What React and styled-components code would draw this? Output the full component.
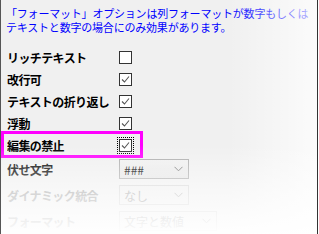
import React from "react";
import styled, { createGlobalStyle } from "styled-components";

const GlobalStyle = createGlobalStyle`
  html, body {
    margin: 0;
    padding: 0;
    background: #fff;
  }
  body {
    font-family: "Noto Sans CJK JP", "Noto Sans", sans-serif;
  }
`;

const Panel = styled.div`
  position: relative;
  width: 316px;
  height: 234px;
  background: #f0f0f0;
  border-left: 1px solid #555;
  border-right: 1px solid #333;
  overflow: hidden;

  &::after {
    content: "";
    position: absolute;
    inset: 0;
    pointer-events: none;
    background:
      linear-gradient(to bottom, rgba(255,255,255,0) 62%, rgba(255,255,255,0.55) 82%, rgba(255,255,255,0.97) 100%),
      linear-gradient(to right, rgba(255,255,255,0) 72%, rgba(255,255,255,0.75) 100%);
  }
`;

const Note = styled.p`
  margin: 0;
  padding: 6px 0 0 5px;
  font-size: 11px;
  line-height: 14px;
  color: #0000ff;
  white-space: nowrap;
  letter-spacing: -0.2px;
`;

const Rows = styled.div`
  margin-top: 12px;
  display: flex;
  flex-direction: column;
`;

const Row = styled.div`
  position: relative;
  display: flex;
  align-items: center;
  height: ${(p) => (p.$tall ? 26 : 22)}px;
  padding-left: 6px;

  ${(p) =>
    p.$highlight &&
    `
    &::before {
      content: "";
      position: absolute;
      left: 0;
      top: -3px;
      width: 136px;
      height: 21px;
      border: 3px solid #ff00ff;
    }
  `}
`;

const Label = styled.span`
  width: 112px;
  flex: none;
  font-size: 12px;
  font-weight: 700;
  letter-spacing: -0.6px;
  color: ${(p) => (p.$disabled ? "#a0a0a0" : "#000")};
  white-space: nowrap;
  overflow: hidden;
`;

const Box = styled.span`
  position: relative;
  width: 11px;
  height: 11px;
  border: 1px solid #333;
  background: #fff;
  display: flex;
  align-items: center;
  justify-content: center;

  ${(p) =>
    p.$focus &&
    `
    outline: 1px dotted #000;
    outline-offset: 1px;
  `}
`;

const Select = styled.div`
  width: ${(p) => p.$width}px;
  height: 18px;
  box-sizing: content-box;
  border: 1px solid ${(p) => (p.$disabled ? "#d4d4d4" : "#acacac")};
  background: ${(p) =>
    p.$disabled ? "#efefef" : "linear-gradient(#f0f0f0, #e5e5e5)"};
  display: flex;
  align-items: center;
  justify-content: space-between;
  padding: 0 5px 0 4px;
  font-size: 12px;
  color: ${(p) => (p.$disabled ? "#a0a0a0" : "#000")};
`;

const Check = () => (
  <svg width="9" height="9" viewBox="0 0 9 9">
    <path d="M1 4.5 L3.5 7 L8 1.5" fill="none" stroke="#555" strokeWidth="1.1" />
  </svg>
);

const Chevron = ({ color }) => (
  <svg width="9" height="6" viewBox="0 0 9 6">
    <path d="M0.5 0.8 L4.5 4.8 L8.5 0.8" fill="none" stroke={color} strokeWidth="1" />
  </svg>
);

export default function App() {
  return (
    <>
      <GlobalStyle />
      <Panel>
        <Note>
          「フォーマット」オプションは列フォーマットが数字もしくは
          <br />
          テキストと数字の場合にのみ効果があります。
        </Note>
        <Rows>
          <Row>
            <Label>リッチテキスト</Label>
            <Box />
          </Row>
          <Row>
            <Label>改行可</Label>
            <Box>
              <Check />
            </Box>
          </Row>
          <Row>
            <Label>テキストの折り返し</Label>
            <Box>
              <Check />
            </Box>
          </Row>
          <Row>
            <Label>浮動</Label>
            <Box>
              <Check />
            </Box>
          </Row>
          <Row $highlight>
            <Label>編集の禁止</Label>
            <Box $focus>
              <Check />
            </Box>
          </Row>
          <Row $tall>
            <Label>伏せ文字</Label>
            <Select $width={59}>
              <span>###</span>
              <Chevron color="#777" />
            </Select>
          </Row>
          <Row $tall>
            <Label $disabled>ダイナミック統合</Label>
            <Select $width={59} $disabled>
              <span>なし</span>
              <Chevron color="#b0b0b0" />
            </Select>
          </Row>
          <Row $tall>
            <Label $disabled>フォーマット</Label>
            <Select $width={87} $disabled>
              <span>文字と数値</span>
              <Chevron color="#b0b0b0" />
            </Select>
          </Row>
        </Rows>
      </Panel>
    </>
  );
}
